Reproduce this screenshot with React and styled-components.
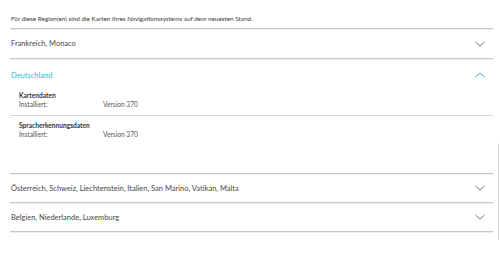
import React from "react";
import styled, { createGlobalStyle } from "styled-components";

const Global = createGlobalStyle`
  html, body { margin: 0; padding: 0; background: #fff; }
  body { font-family: Lato, "Open Sans", sans-serif; color: #333; -webkit-font-smoothing: antialiased; }
`;

const Page = styled.div`
  width: 500px;
  height: 262px;
  box-sizing: border-box;
  padding: 14px 7px 0 10px;
  position: relative;
  overflow: hidden;
`;

const Intro = styled.div`
  font-size: 6.35px;
  line-height: 10px;
  color: #3a3a3a;
  padding: 0 0 4px 1px;
  border-bottom: 1px solid #c6c6c6;
  box-shadow: 0 1px 0 #ececec;
`;

const Item = styled.div`
  border-bottom: 1px solid #c6c6c6;
  box-shadow: 0 1px 0 #ececec;
`;

const Head = styled.div`
  height: ${(p) => p.$h || 28}px;
  display: flex;
  align-items: center;
  justify-content: space-between;
  padding: 0 8px 0 1px;
  font-size: 7.5px;
  color: ${(p) => (p.$open ? "#2bb8d6" : "#484848")};
`;

const Body = styled.div`
  height: 82px;
`;

const Block = styled.div`
  padding: ${(p) => p.$pad};
  border-bottom: ${(p) => (p.$line ? "1px solid #d4d4d4" : "none")};
`;

const Title = styled.div`
  font-size: 6.6px;
  font-weight: 700;
  color: #333;
  line-height: 9px;
`;

const Row = styled.div`
  display: grid;
  grid-template-columns: 84px 1fr;
  font-size: 6.6px;
  color: #555;
  line-height: 9px;
`;

const Thumb = styled.div`
  position: absolute;
  right: 1px;
  top: 143px;
  width: 1px;
  height: 97px;
  background: #dcdcdc;
`;

const Chevron = ({ up, color }) => (
  <svg width="10" height="6" viewBox="0 0 10 6">
    <path
      d={up ? "M0.5 5 L5 1 L9.5 5" : "M0.5 1 L5 5 L9.5 1"}
      fill="none"
      stroke={color}
      strokeWidth="1"
    />
  </svg>
);

const items = [
  "Österreich, Schweiz, Liechtenstein, Italien, San Marino, Vatikan, Malta",
  "Belgien, Niederlande, Luxemburg",
];

export default function App() {
  return (
    <Page>
      <Global />
      <Intro>
        Für diese Region(en) sind die Karten Ihres Navigationssystems auf dem neuesten Stand.
      </Intro>
      <Item>
        <Head $h={29}>
          <span>Frankreich, Monaco</span>
          <Chevron color="#777" />
        </Head>
      </Item>
      <Item>
        <Head $open $h={32}>
          <span>Deutschland</span>
          <Chevron up color="#2bb8d6" />
        </Head>
        <Body>
          <Block $line $pad="0 0 6px 9px">
            <Title>Kartendaten</Title>
            <Row>
              <span>Installiert:</span>
              <span>Version 370</span>
            </Row>
          </Block>
          <Block $pad="5px 0 0 9px">
            <Title>Spracherkennungsdaten</Title>
            <Row>
              <span>Installiert:</span>
              <span>Version 370</span>
            </Row>
          </Block>
        </Body>
      </Item>
      {items.map((t) => (
        <Item key={t}>
          <Head>
            <span>{t}</span>
            <Chevron color="#777" />
          </Head>
        </Item>
      ))}
      <Thumb />
    </Page>
  );
}
